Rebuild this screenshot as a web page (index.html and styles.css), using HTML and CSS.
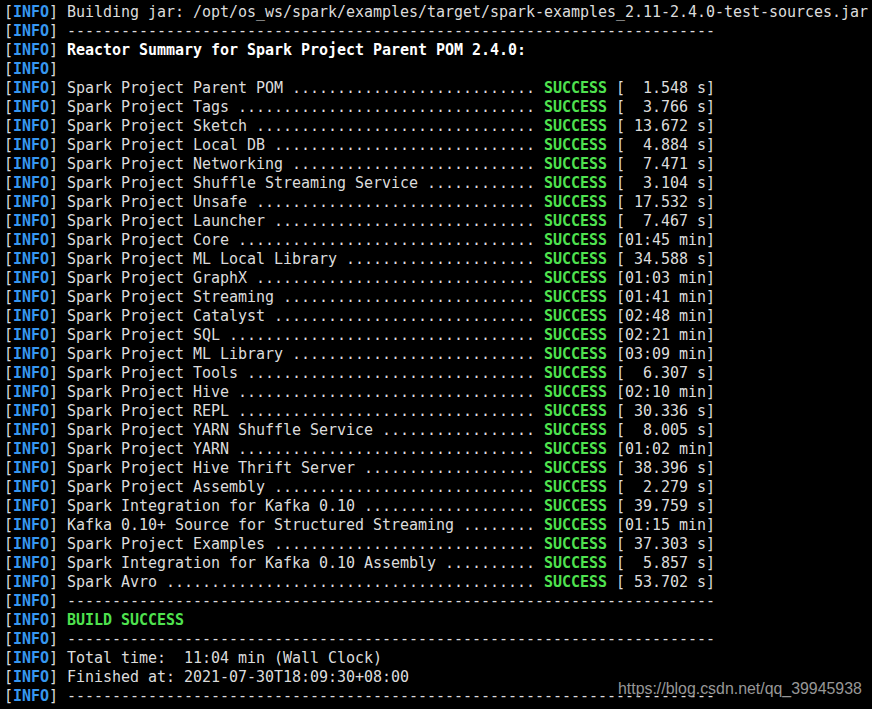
FILE: index.html
```html
<!DOCTYPE html>
<html>
<head>
<meta charset="utf-8">
<link rel="stylesheet" href="styles.css">
</head>
<body>
<pre class="term"><span class="b">[</span><span class="info">INFO</span><span class="b">]</span> Building jar: /opt/os_ws/spark/examples/target/spark-examples_2.11-2.4.0-test-sources.jar
<span class="b">[</span><span class="info">INFO</span><span class="b">]</span> ------------------------------------------------------------------------
<span class="b">[</span><span class="info">INFO</span><span class="b">]</span> <span class="hl">Reactor Summary for Spark Project Parent POM 2.4.0:</span>
<span class="b">[</span><span class="info">INFO</span><span class="b">]</span>
<span class="b">[</span><span class="info">INFO</span><span class="b">]</span> Spark Project Parent POM ........................... <span class="ok">SUCCESS</span> [  1.548 s]
<span class="b">[</span><span class="info">INFO</span><span class="b">]</span> Spark Project Tags ................................. <span class="ok">SUCCESS</span> [  3.766 s]
<span class="b">[</span><span class="info">INFO</span><span class="b">]</span> Spark Project Sketch ............................... <span class="ok">SUCCESS</span> [ 13.672 s]
<span class="b">[</span><span class="info">INFO</span><span class="b">]</span> Spark Project Local DB ............................. <span class="ok">SUCCESS</span> [  4.884 s]
<span class="b">[</span><span class="info">INFO</span><span class="b">]</span> Spark Project Networking ........................... <span class="ok">SUCCESS</span> [  7.471 s]
<span class="b">[</span><span class="info">INFO</span><span class="b">]</span> Spark Project Shuffle Streaming Service ............ <span class="ok">SUCCESS</span> [  3.104 s]
<span class="b">[</span><span class="info">INFO</span><span class="b">]</span> Spark Project Unsafe ............................... <span class="ok">SUCCESS</span> [ 17.532 s]
<span class="b">[</span><span class="info">INFO</span><span class="b">]</span> Spark Project Launcher ............................. <span class="ok">SUCCESS</span> [  7.467 s]
<span class="b">[</span><span class="info">INFO</span><span class="b">]</span> Spark Project Core ................................. <span class="ok">SUCCESS</span> [01:45 min]
<span class="b">[</span><span class="info">INFO</span><span class="b">]</span> Spark Project ML Local Library ..................... <span class="ok">SUCCESS</span> [ 34.588 s]
<span class="b">[</span><span class="info">INFO</span><span class="b">]</span> Spark Project GraphX ............................... <span class="ok">SUCCESS</span> [01:03 min]
<span class="b">[</span><span class="info">INFO</span><span class="b">]</span> Spark Project Streaming ............................ <span class="ok">SUCCESS</span> [01:41 min]
<span class="b">[</span><span class="info">INFO</span><span class="b">]</span> Spark Project Catalyst ............................. <span class="ok">SUCCESS</span> [02:48 min]
<span class="b">[</span><span class="info">INFO</span><span class="b">]</span> Spark Project SQL .................................. <span class="ok">SUCCESS</span> [02:21 min]
<span class="b">[</span><span class="info">INFO</span><span class="b">]</span> Spark Project ML Library ........................... <span class="ok">SUCCESS</span> [03:09 min]
<span class="b">[</span><span class="info">INFO</span><span class="b">]</span> Spark Project Tools ................................ <span class="ok">SUCCESS</span> [  6.307 s]
<span class="b">[</span><span class="info">INFO</span><span class="b">]</span> Spark Project Hive ................................. <span class="ok">SUCCESS</span> [02:10 min]
<span class="b">[</span><span class="info">INFO</span><span class="b">]</span> Spark Project REPL ................................. <span class="ok">SUCCESS</span> [ 30.336 s]
<span class="b">[</span><span class="info">INFO</span><span class="b">]</span> Spark Project YARN Shuffle Service ................. <span class="ok">SUCCESS</span> [  8.005 s]
<span class="b">[</span><span class="info">INFO</span><span class="b">]</span> Spark Project YARN ................................. <span class="ok">SUCCESS</span> [01:02 min]
<span class="b">[</span><span class="info">INFO</span><span class="b">]</span> Spark Project Hive Thrift Server ................... <span class="ok">SUCCESS</span> [ 38.396 s]
<span class="b">[</span><span class="info">INFO</span><span class="b">]</span> Spark Project Assembly ............................. <span class="ok">SUCCESS</span> [  2.279 s]
<span class="b">[</span><span class="info">INFO</span><span class="b">]</span> Spark Integration for Kafka 0.10 ................... <span class="ok">SUCCESS</span> [ 39.759 s]
<span class="b">[</span><span class="info">INFO</span><span class="b">]</span> Kafka 0.10+ Source for Structured Streaming ........ <span class="ok">SUCCESS</span> [01:15 min]
<span class="b">[</span><span class="info">INFO</span><span class="b">]</span> Spark Project Examples ............................. <span class="ok">SUCCESS</span> [ 37.303 s]
<span class="b">[</span><span class="info">INFO</span><span class="b">]</span> Spark Integration for Kafka 0.10 Assembly .......... <span class="ok">SUCCESS</span> [  5.857 s]
<span class="b">[</span><span class="info">INFO</span><span class="b">]</span> Spark Avro ......................................... <span class="ok">SUCCESS</span> [ 53.702 s]
<span class="b">[</span><span class="info">INFO</span><span class="b">]</span> ------------------------------------------------------------------------
<span class="b">[</span><span class="info">INFO</span><span class="b">]</span> <span class="ok">BUILD SUCCESS</span>
<span class="b">[</span><span class="info">INFO</span><span class="b">]</span> ------------------------------------------------------------------------
<span class="b">[</span><span class="info">INFO</span><span class="b">]</span> Total time:  11:04 min (Wall Clock)
<span class="b">[</span><span class="info">INFO</span><span class="b">]</span> Finished at: 2021-07-30T18:09:30+08:00
<span class="b">[</span><span class="info">INFO</span><span class="b">]</span> ------------------------------------------------------------------------</pre>
<div class="watermark">https://blog.csdn.net/qq_39945938</div>
</body>
</html>
```
FILE: styles.css
```css
html, body {
  margin: 0;
  padding: 0;
  background: #000;
  width: 872px;
  height: 709px;
  overflow: hidden;
}
body {
  position: relative;
}
.term {
  margin: 0;
  padding: 3px 0 0 4px;
  font-family: "DejaVu Sans Mono", monospace;
  font-size: 15px;
  letter-spacing: -0.03px;
  line-height: 19px;
  color: #dcdcdc;
}
.b {
  color: #dcdcdc;
}
.info {
  color: #3797f0;
  font-weight: bold;
}
.hl {
  color: #ffffff;
  font-weight: bold;
}
.ok {
  color: #4fe24f;
  font-weight: bold;
}
.watermark {
  position: absolute;
  left: 618px;
  top: 680px;
  font-family: "Liberation Sans", Arial, sans-serif;
  font-size: 15.9px;
  color: #a8a8a8;
  opacity: 0.9;
}
```
